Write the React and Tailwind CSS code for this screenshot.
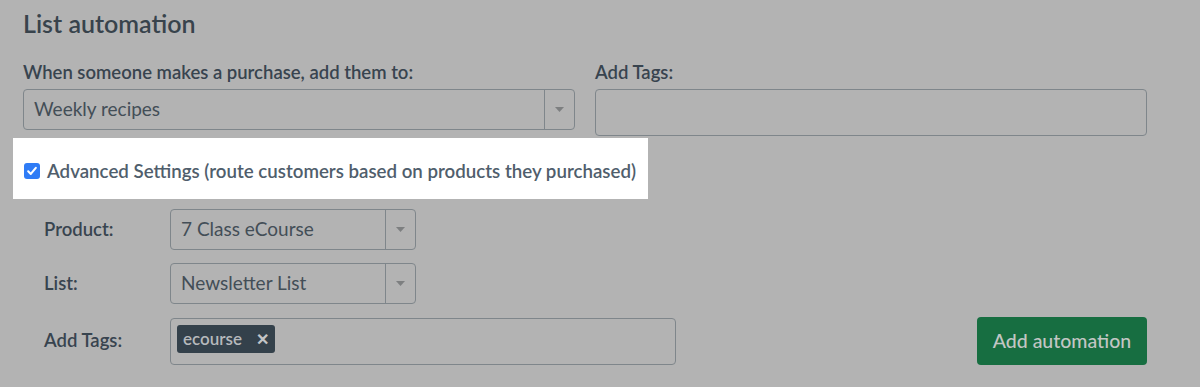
import React from "react";

const font = { fontFamily: '"Lato", "Liberation Sans", sans-serif' };

function Caret() {
  return (
    <svg width="9" height="5" viewBox="0 0 9 5" className="block">
      <path d="M0 0 L9 0 L4.5 5 Z" fill="#7d7f80" />
    </svg>
  );
}

function Select({ value, className }) {
  return (
    <div className={`flex items-stretch rounded-[4px] border border-[#7f868b] ${className}`}>
      <div className="flex flex-1 items-center pl-[10px] text-[19px] text-[#434e57]">{value}</div>
      <div className="flex w-[30px] items-center justify-center border-l border-[#7f868b]">
        <Caret />
      </div>
    </div>
  );
}

export default function App() {
  return (
    <div className="h-[387px] w-[1200px] overflow-hidden bg-[#b3b3b3]" style={font}>
      <div className="pt-[7px]">
        <h2 className="pl-[23px] text-[25px] font-semibold leading-[32px] text-[#38434c]">List automation</h2>
        <div className="mt-[23px] grid w-[1147px] grid-cols-2 gap-x-[20px] pl-[23px]">
          <div>
            <div className="text-[18.5px] font-semibold leading-[20px] text-[#38444f]">
              When someone makes a purchase, add them to:
            </div>
            <Select value="Weekly recipes" className="mt-[7px] h-[41px]" />
          </div>
          <div>
            <div className="text-[18.5px] font-semibold leading-[20px] text-[#38444f]">Add Tags:</div>
            <div className="mt-[7px] h-[47px] rounded-[4px] border border-[#7f868b]" />
          </div>
        </div>
        <div className="ml-[13px] mt-[2px] flex h-[61px] w-[635px] items-center bg-white pl-[11px] pt-[5px]">
          <span className="flex h-[16px] w-[16px] items-center justify-center rounded-[3px] bg-[#2f7cf6]">
            <svg width="12" height="12" viewBox="0 0 11 11">
              <path d="M2 5.8 L4.4 8.2 L9 2.6" fill="none" stroke="white" strokeWidth="1.9" strokeLinecap="round" strokeLinejoin="round" />
            </svg>
          </span>
          <span className="ml-[7px] text-[18.7px] font-semibold text-[#505e6c]">
            Advanced Settings (route customers based on products they purchased)
          </span>
        </div>
        <div className="mt-[10px] flex flex-col gap-[13px] pl-[44px]">
          <div className="flex items-center">
            <div className="w-[126px] text-[18.5px] font-semibold text-[#38444f]">Product:</div>
            <Select value="7 Class eCourse" className="h-[41px] w-[246px]" />
          </div>
          <div className="flex items-center">
            <div className="w-[126px] text-[18.5px] font-semibold text-[#38444f]">List:</div>
            <Select value="Newsletter List" className="h-[41px] w-[246px]" />
          </div>
          <div className="flex items-center">
            <div className="w-[126px] text-[18.5px] font-semibold text-[#38444f]">Add Tags:</div>
            <div className="flex h-[47px] w-[506px] items-start rounded-[4px] border border-[#7f868b] pl-[6px] pt-[6px]">
              <span className="flex h-[28px] items-center rounded-[3px] bg-[#34414b] pl-[6px] pr-[6px] text-[17px] font-semibold text-[#b6b9bc]">
                ecourse
                <span className="ml-[14px] text-[16px] font-bold text-[#c2c4c6]">✕</span>
              </span>
            </div>
            <div className="ml-auto mr-[53px] flex h-[48px] w-[170px] items-center justify-center rounded-[4px] bg-[#176e41] text-[19.5px] font-medium text-[#c2c6c4]">
              Add automation
            </div>
          </div>
        </div>
      </div>
    </div>
  );
}
